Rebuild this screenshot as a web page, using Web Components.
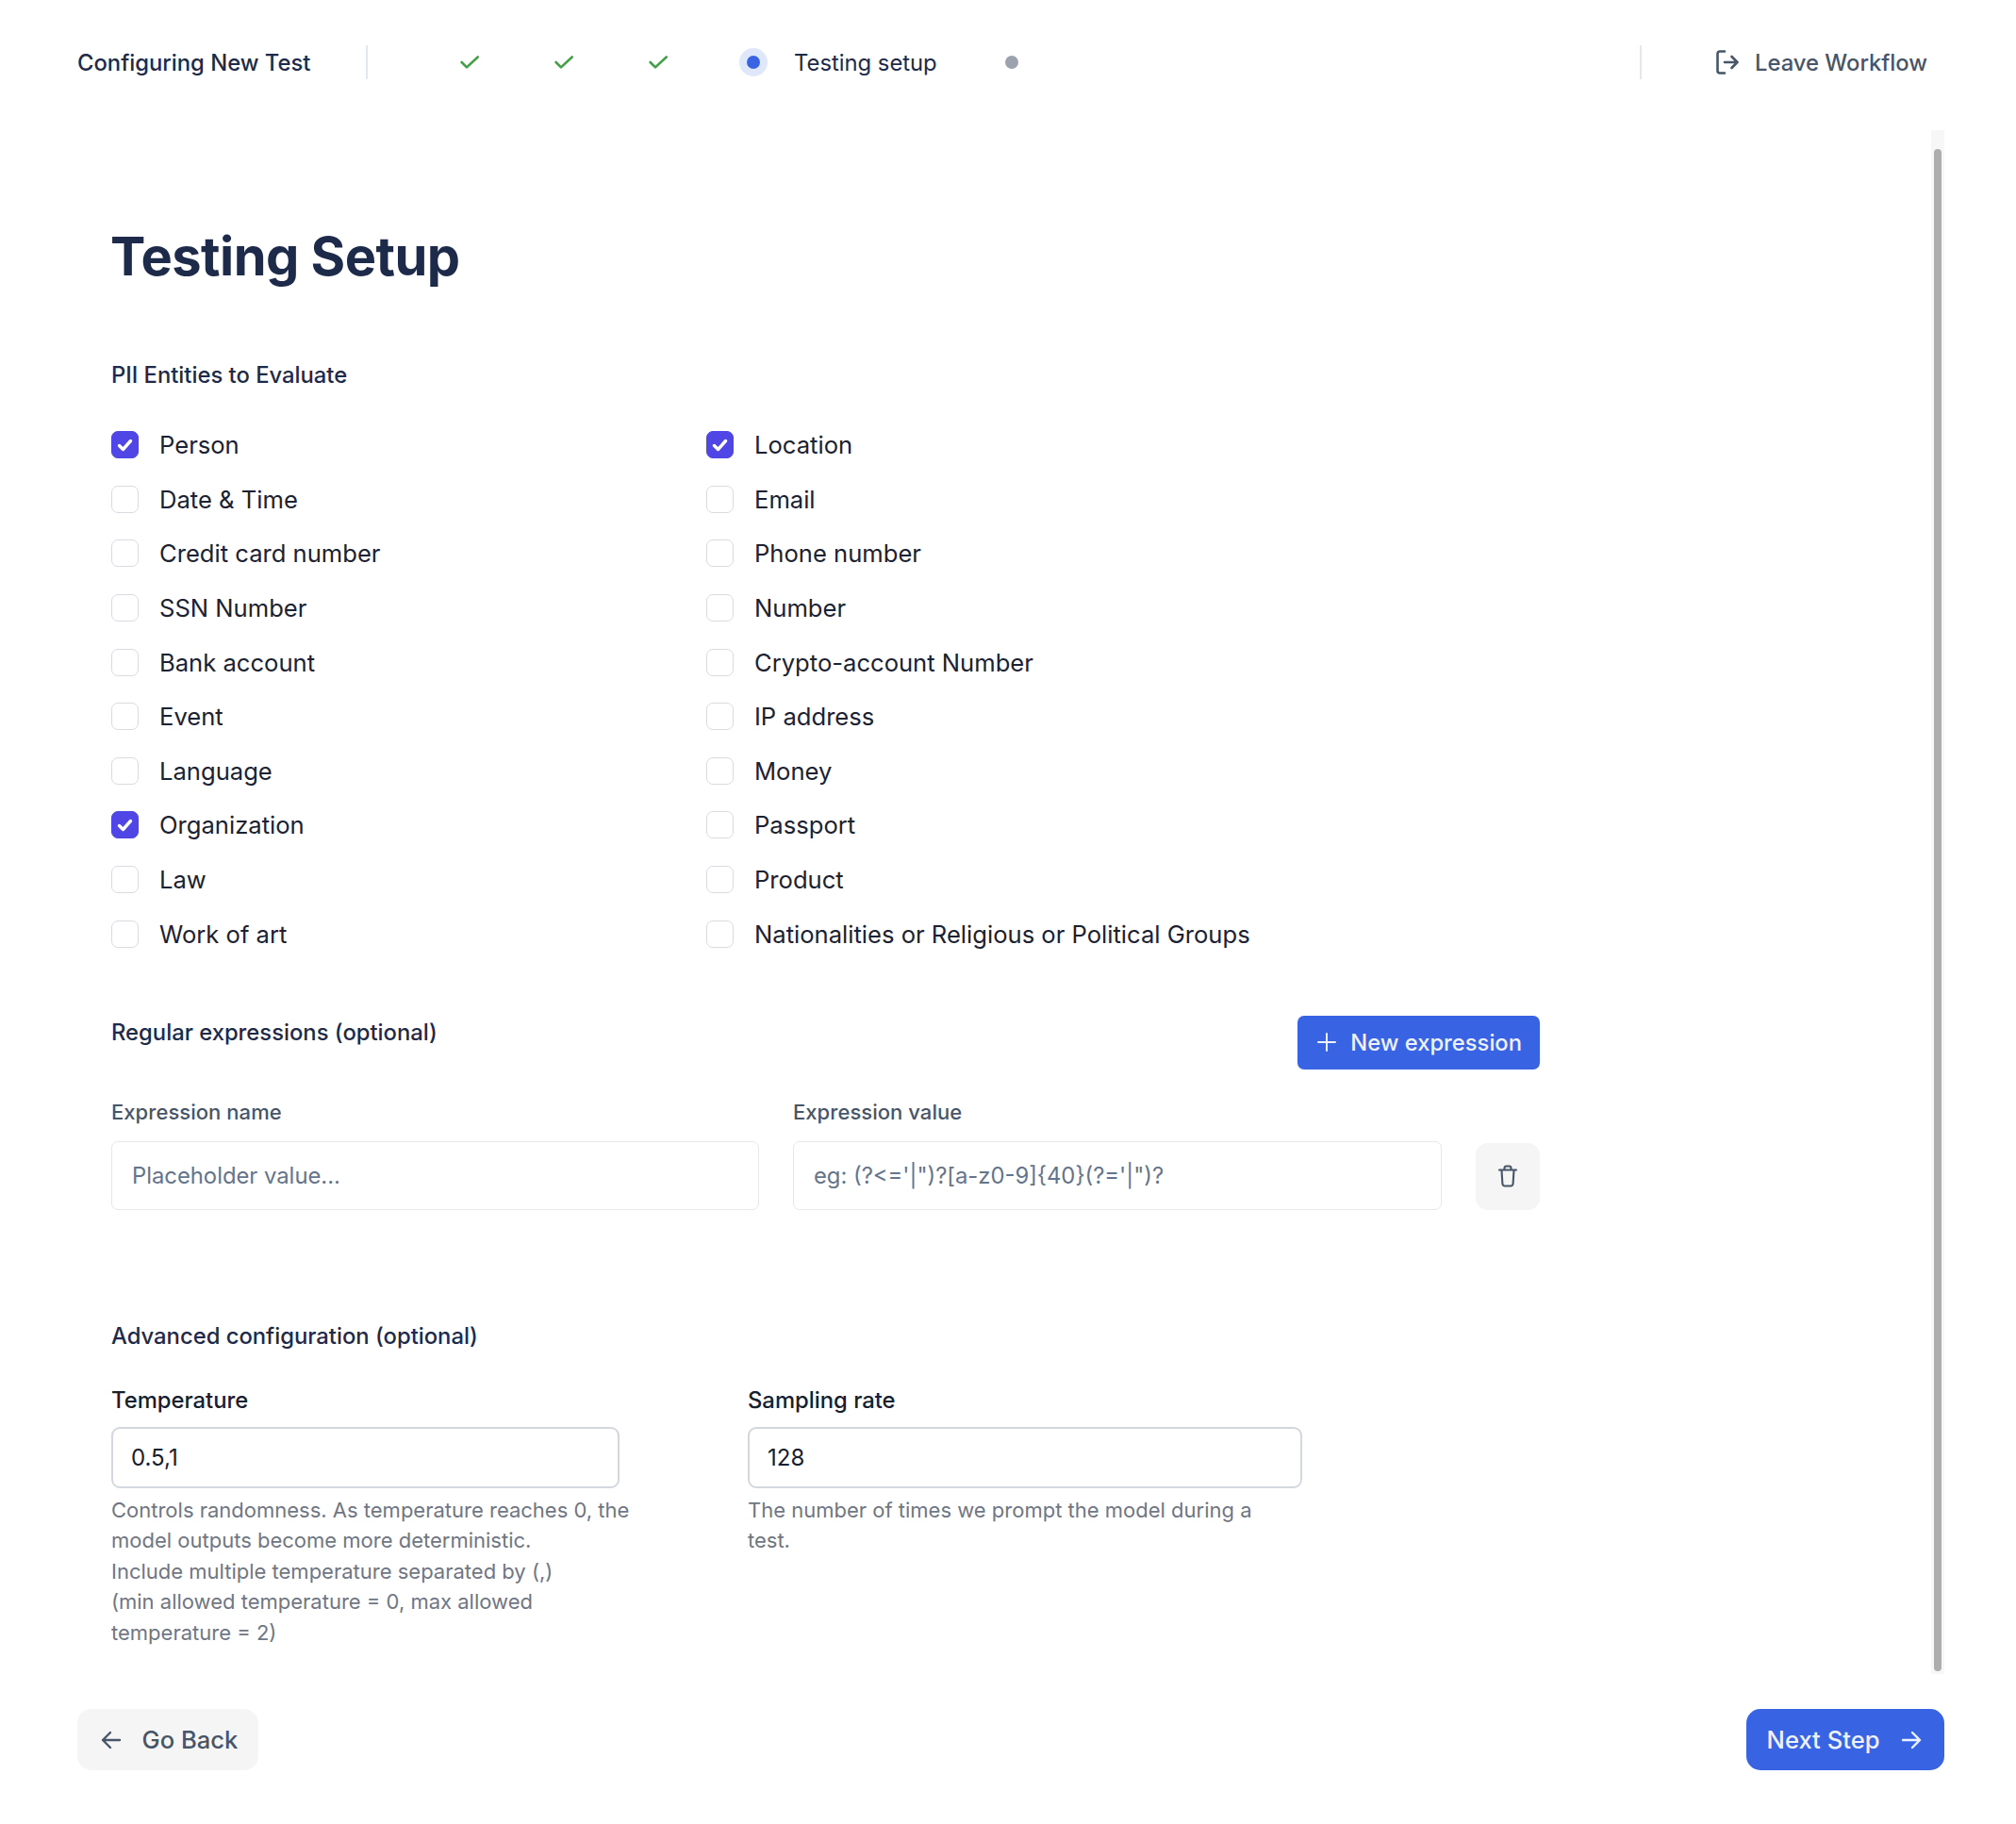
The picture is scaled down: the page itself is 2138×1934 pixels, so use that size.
<!DOCTYPE html>
<html>
<head>
<meta charset="utf-8">
<title>Testing Setup</title>
<style>
  html, body { margin: 0; padding: 0; background: #fff; }
  body { font-family: Inter, "Liberation Sans", sans-serif; width: 2138px; height: 1934px; overflow: hidden; }
</style>
</head>
<body>
<workflow-page>
  <workflow-topbar slot="top" title-text="Configuring New Test" current="Testing setup"></workflow-topbar>
  <testing-setup></testing-setup>
  <app-button slot="back" kind="soft" icon="left">Go Back</app-button>
  <app-button slot="next" kind="primary" icon="right">Next Step</app-button>
</workflow-page>

<script>
const ICONS = {
  left: `<svg width="24" height="24" viewBox="0 0 24 24" fill="none" stroke="currentColor" stroke-width="2.400" stroke-linecap="round" stroke-linejoin="round"><path d="M21 12H3M11 4 3 12l8 8"/></svg>`,
  right: `<svg width="24" height="24" viewBox="0 0 24 24" fill="none" stroke="currentColor" stroke-width="2.400" stroke-linecap="round" stroke-linejoin="round"><path d="M3 12h18M13 4l8 8-8 8"/></svg>`,
  plus: `<svg width="22" height="22" viewBox="0 0 22 22" fill="none" stroke="currentColor" stroke-width="2" stroke-linecap="round"><path d="M11 2v18M2 11h18"/></svg>`,
  check: `<svg width="24" height="24" viewBox="0 0 24 24" fill="none" stroke="#43a047" stroke-width="2.600" stroke-linecap="round" stroke-linejoin="round"><path d="M2.600 12 8 17.400 19.700 6.500"/></svg>`,
  leave: `<svg width="24" height="26" viewBox="0 0 24 26" fill="none" stroke="#475569" stroke-width="2.600" stroke-linecap="round" stroke-linejoin="round"><path d="M9 1.500H4Q1.500 1.500 1.500 4v18Q1.500 24.500 4 24.500h5M9 13h13.500M16.500 7l6 6-6 6"/></svg>`,
  trash: `<svg width="20" height="24" viewBox="0 0 20 24" fill="none" stroke="#475569" stroke-width="2.100" stroke-linecap="round" stroke-linejoin="round"><path d="M1 5.500h18M6.500 5V3.500Q6.500 1.500 8.500 1.500h3q2 0 2 2V5M3.500 6l.9 14q.2 2.500 2.600 2.500h6q2.400 0 2.600-2.500l.9-14"/></svg>`
}

class Workflow_page extends HTMLElement {
  constructor() {
    super()
    this.attachShadow({ mode: "open" })
    this.shadowRoot.innerHTML = `
      <style>
        :host { display: flex; flex-direction: column; height: 1934px; box-sizing: border-box; padding: 0 76px 0 82px; }
        .middle { display: flex; height: 1637px; margin-top: 6px; }
        .content { flex: 1; padding-left: 36px; }
        .track { width: 14px; background: #f7f7f7; padding: 20px 3px 3px; box-sizing: border-box; }
        .thumb { height: 100%; background: #adadad; border-radius: 4px; }
        .footer { display: flex; justify-content: space-between; margin-top: 37px; }
      </style>
      <slot name="top"></slot>
      <div class="middle">
        <div class="content"><slot></slot></div>
        <div class="track"><div class="thumb"></div></div>
      </div>
      <div class="footer"><slot name="back"></slot><slot name="next"></slot></div>
    `
  }
}
customElements.define('workflow-page', Workflow_page)

class Workflow_topbar extends HTMLElement {
  constructor() {
    super()
    this.attachShadow({ mode: "open" })
  }
  connectedCallback() {
    this.shadowRoot.innerHTML = `
      <style>
        :host { display: flex; align-items: center; height: 132px; color: #1e293b; font-size: 23.8px; }
        .name { width: 306px; font-weight: 500; color: #1e2a4a; }
        .rule { width: 2px; height: 36px; background: #e2e8f0; }
        .steps { display: flex; align-items: center; flex: 1; padding-left: 97px; }
        .check { width: 24px; height: 24px; margin-right: 76px; display: flex; }
        .current { width: 30px; height: 30px; border-radius: 50%; background: #dfe8fb; display: flex; align-items: center; justify-content: center; margin-right: 28px; }
        .current i { width: 14px; height: 14px; border-radius: 50%; background: #3864e4; display: block; }
        .label { color: #1e2a4a; margin-right: 72px; }
        .todo { width: 14px; height: 14px; border-radius: 50%; background: #9ca3af; }
        .leave { display: flex; align-items: center; width: 321px; justify-content: flex-end; color: #475569; font-weight: 500; }
        .leave svg { margin-right: 17px; }
        .leave span { margin-right: 18px; }
      </style>
      <div class="name">${this.getAttribute("title-text")}</div>
      <div class="rule"></div>
      <div class="steps">
        <div class="check">${ICONS.check}</div>
        <div class="check">${ICONS.check}</div>
        <div class="check" style="margin-right:73px">${ICONS.check}</div>
        <div class="current"><i></i></div>
        <div class="label">${this.getAttribute("current")}</div>
        <div class="todo"></div>
      </div>
      <div class="rule"></div>
      <div class="leave">${ICONS.leave}<span>Leave Workflow</span></div>
    `
  }
}
customElements.define('workflow-topbar', Workflow_topbar)

class App_button extends HTMLElement {
  constructor() {
    super()
    this.attachShadow({ mode: "open" })
  }
  connectedCallback() {
    const icon = ICONS[this.getAttribute("icon")]
    const before = this.getAttribute("icon") !== "right"
    this.shadowRoot.innerHTML = `
      <style>
        :host { display: inline-flex; align-items: center; box-sizing: border-box; font-size: 25.6px; height: 65px; border-radius: 15px; font-weight: 500; }
        :host([kind=soft]) { background: #f5f5f5; color: #475569; padding: 0 22px 0 24px; gap: 20.5px; }
        :host([kind=primary]) { background: #3864e4; color: #ecf1fe; padding: 0 23px 0 22px; gap: 21.5px; }
        :host([size=small]) { font-size: 23.75px; height: 57px; border-radius: 7px; padding: 0 19px 0 20px; gap: 14.5px; }
        svg { display: block; }
      </style>
      ${before ? icon : ""}<span><slot></slot></span>${before ? "" : icon}
    `
  }
}
customElements.define('app-button', App_button)

class Pii_option extends HTMLElement {
  constructor() {
    super()
    this.attachShadow({ mode: "open" })
    this.shadowRoot.innerHTML = `
      <style>
        :host { display: flex; align-items: center; height: 57.6px; font-size: 25.6px; color: #1a2233; }
        .box { box-sizing: border-box; width: 29px; height: 29px; border: 1.5px solid #d8dbe2; border-radius: 7px; margin-right: 22px; display: flex; align-items: center; justify-content: center; background: #fff; }
        :host([checked]) .box { background: #4f46e5; border-color: #4f46e5; }
        svg { display: none; }
        :host([checked]) svg { display: block; }
      </style>
      <div class="box"><svg width="17" height="14" viewBox="0 0 17 14" fill="none" stroke="#fff" stroke-width="3.400" stroke-linecap="round" stroke-linejoin="round"><path d="M2.500 7.500 6.500 11.500 14.500 2.500"/></svg></div>
      <span><slot></slot></span>
    `
  }
}
customElements.define('pii-option', Pii_option)

class Section_label extends HTMLElement {
  constructor() {
    super()
    this.attachShadow({ mode: "open" })
    this.shadowRoot.innerHTML = `
      <style>
        :host { display: block; font-size: 23.8px; font-weight: 500; color: #1e2a4a; line-height: 30px; }
      </style>
      <slot></slot>
    `
  }
}
customElements.define('section-label', Section_label)

class Text_field extends HTMLElement {
  constructor() {
    super()
    this.attachShadow({ mode: "open" })
  }
  connectedCallback() {
    const help = this.getAttribute("strong") !== null
    this.shadowRoot.innerHTML = `
      <style>
        :host { display: block; }
        .lab { font-size: 22px; line-height: 28px; font-weight: 500; color: #475569; margin-bottom: 17px; letter-spacing: 0.05px; }
        .inp { box-sizing: border-box; height: 73px; border: 1.5px solid #e7e7ea; border-radius: 7px; display: flex; align-items: center; padding-left: 21px; font-size: 23.8px; color: #64748b; }
        :host([strong]) .lab { font-size: 23.8px; line-height: 30px; color: #17202f; margin-bottom: 13px; letter-spacing: 0; }
        :host([strong]) .inp { height: 65px; border: 2px solid #d3d7de; border-radius: 9px; color: #17202f; padding-left: 19px; font-size: 24px; }
        .help { width: 560px; font-size: 22px; line-height: 32.4px; color: #6f7684; margin-top: 7px; }
      </style>
      <div class="lab">${this.getAttribute("label")}</div>
      <div class="inp">${this.getAttribute("value")}</div>
      ${help ? `<div class="help"><slot></slot></div>` : ""}
    `
  }
}
customElements.define('text-field', Text_field)

class Testing_setup extends HTMLElement {
  constructor() {
    super()
    this.attachShadow({ mode: "open" })
  }
  option(name, checked) {
    return `<pii-option ${checked ? "checked" : ""}>${name}</pii-option>`
  }
  connectedCallback() {
    const left = ["Person", "Date &amp; Time", "Credit card number", "SSN Number", "Bank account", "Event", "Language", "Organization", "Law", "Work of art"]
    const right = ["Location", "Email", "Phone number", "Number", "Crypto-account Number", "IP address", "Money", "Passport", "Product", "Nationalities or Religious or Political Groups"]
    const on = ["Person", "Organization", "Location"]
    this.shadowRoot.innerHTML = `
      <style>
        :host { display: block; width: 1515px; }
        h1 { margin: 0 0 0 -1px; padding-top: 97px; font-size: 56px; line-height: 74px; font-weight: 700; color: #1e2a4a; letter-spacing: -0.55px; }
        .pii-title { margin-top: 74px; }
        .pii { display: grid; grid-template-columns: 631px 1fr; margin-top: 30px; }
        .regex-head { display: flex; justify-content: space-between; align-items: flex-start; margin-top: 58px; }
        .regex-head section-label { margin-top: 3px; }
        .regex { display: grid; grid-template-columns: 687px 688px 68px; column-gap: 36px; margin-top: 31px; align-items: end; }
        .trash { height: 71px; border-radius: 13px; background: #f5f5f5; display: flex; align-items: center; justify-content: center; }
        .adv-title { margin-top: 119px; }
        .adv { display: grid; grid-template-columns: 539px 588px; column-gap: 136px; margin-top: 38px; align-items: start; }
      </style>
      <h1>Testing Setup</h1>
      <section-label class="pii-title">PII Entities to Evaluate</section-label>
      <div class="pii">
        <div>${left.map(n => this.option(n, on.includes(n))).join("")}</div>
        <div>${right.map(n => this.option(n, on.includes(n))).join("")}</div>
      </div>
      <div class="regex-head">
        <section-label>Regular expressions (optional)</section-label>
        <app-button kind="primary" icon="plus" size="small">New expression</app-button>
      </div>
      <div class="regex">
        <text-field label="Expression name" value="Placeholder value..."></text-field>
        <text-field label="Expression value" value="eg: (?&lt;='|&quot;)?[a-z0-9]{40}(?='|&quot;)?"></text-field>
        <div class="trash">${ICONS.trash}</div>
      </div>
      <section-label class="adv-title">Advanced configuration (optional)</section-label>
      <div class="adv">
        <text-field strong label="Temperature" value="0.5,1">Controls randomness. As temperature reaches 0, the model outputs become more deterministic.<br>Include multiple temperature separated by (,)<br>(min allowed temperature = 0, max allowed temperature = 2)</text-field>
        <text-field strong label="Sampling rate" value="128">The number of times we prompt the model during a test.</text-field>
      </div>
    `
  }
}
customElements.define('testing-setup', Testing_setup)
</script>
</body>
</html>
